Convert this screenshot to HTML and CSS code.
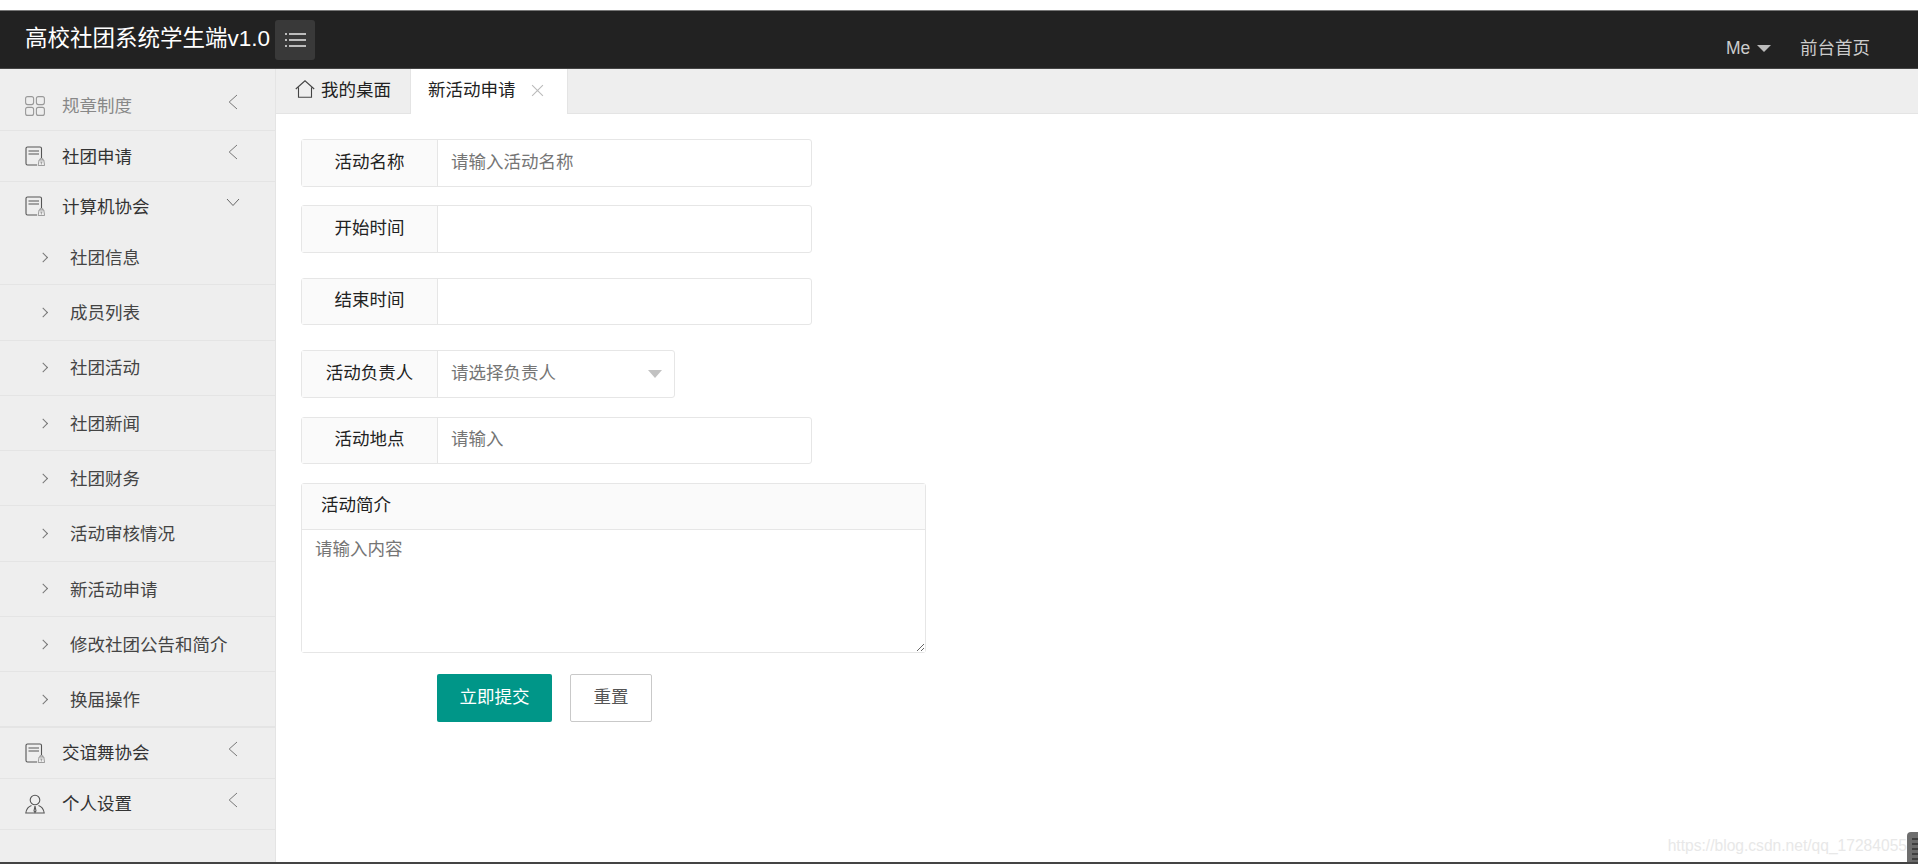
FILE: index.html
```html
<!DOCTYPE html>
<html lang="zh-CN">
<head>
<meta charset="utf-8">
<title>高校社团系统学生端</title>
<link rel="stylesheet" href="styles.css">
</head>
<body>
<svg class="defs" width="0" height="0" aria-hidden="true">
  <symbol id="doc" viewBox="0 0 20 20">
    <path d="M16.500 12V2.500A1.500 1.500 0 0 0 15 1H2.500A1.500 1.500 0 0 0 1 2.500V17.500A1.500 1.500 0 0 0 2.500 19H12" fill="none" stroke="currentColor" stroke-width="1.100"/>
    <path d="M3.500 5h10.500M3.500 8h10.500" fill="none" stroke="currentColor" stroke-width="1.100"/>
    <path d="M14 14h4.800l.8 5.500H13.200z M15 14v-1.300h2.800V14" fill="none" stroke="#888" stroke-width=".8"/>
    <path d="M15.200 16h2.400M16.400 16v2.500" fill="none" stroke="#888" stroke-width=".7"/>
  </symbol>
</svg>
<div class="topgap"></div>
<header class="header">
  <div class="brand">高校社团系统学生端v1.0</div>
  <button class="menu-btn" type="button" aria-label="菜单">
    <svg width="21" height="14" viewBox="0 0 21 14"><path d="M0 1h2M4 1h17M0 7h2M4 7h17M0 13h2M4 13h17" stroke="#e8e8e8" stroke-width="1.300" fill="none"/></svg>
  </button>
  <nav class="header-nav">
    <span class="me">Me<i class="caret"></i></span>
    <span class="home-link">前台首页</span>
  </nav>
</header>
<div class="body">
  <aside class="sidebar">
    <div class="row row-first">
      <svg class="ico ico-muted" viewBox="0 0 20 20"><g fill="none" stroke="currentColor" stroke-width="1.100"><rect x=".6" y=".6" width="8" height="8" rx="2"/><rect x="11.400" y=".6" width="8" height="8" rx="2"/><rect x=".6" y="11.400" width="8" height="8" rx="2"/><rect x="11.400" y="11.400" width="8" height="8" rx="2"/></g></svg>
      <span class="muted row-text">规章制度</span>
      <svg class="chev" viewBox="0 0 10 16"><path d="M9 1 1.200 8 9 15" fill="none" stroke="#777" stroke-width="1"/></svg>
    </div>
    <div class="row">
      <svg class="ico"><use href="#doc"/></svg>
      <span class="row-text">社团申请</span>
      <svg class="chev" viewBox="0 0 10 16"><path d="M9 1 1.200 8 9 15" fill="none" stroke="#777" stroke-width="1"/></svg>
    </div>
    <div class="row row-open">
      <svg class="ico"><use href="#doc"/></svg>
      <span class="row-text">计算机协会</span>
      <svg class="chev-down" viewBox="0 0 14 9"><path d="M1 1l6 6.500L13 1" fill="none" stroke="#666" stroke-width="1"/></svg>
    </div>
    <ul class="sub">
      <li><i class="sub-chev"></i><span class="row-text">社团信息</span></li>
      <li><i class="sub-chev"></i><span class="row-text">成员列表</span></li>
      <li><i class="sub-chev"></i><span class="row-text">社团活动</span></li>
      <li><i class="sub-chev"></i><span class="row-text">社团新闻</span></li>
      <li><i class="sub-chev"></i><span class="row-text">社团财务</span></li>
      <li><i class="sub-chev"></i><span class="row-text">活动审核情况</span></li>
      <li><i class="sub-chev"></i><span class="row-text">新活动申请</span></li>
      <li><i class="sub-chev"></i><span class="row-text">修改社团公告和简介</span></li>
      <li><i class="sub-chev"></i><span class="row-text">换届操作</span></li>
    </ul>
    <div class="row">
      <svg class="ico"><use href="#doc"/></svg>
      <span class="row-text">交谊舞协会</span>
      <svg class="chev" viewBox="0 0 10 16"><path d="M9 1 1.200 8 9 15" fill="none" stroke="#777" stroke-width="1"/></svg>
    </div>
    <div class="row">
      <svg class="ico" viewBox="0 0 20 20"><g fill="none" stroke="currentColor" stroke-width="1.100"><circle cx="10" cy="6" r="4.800"/><path d="M6.500 11.500C3.500 12.500 1.500 14.500.8 19h18.400c-.7-4.500-2.700-6.500-5.700-7.500"/><path d="M10 12l-1 5 1 1.500 1-1.500z"/></g></svg>
      <span class="row-text">个人设置</span>
      <svg class="chev" viewBox="0 0 10 16"><path d="M9 1 1.200 8 9 15" fill="none" stroke="#777" stroke-width="1"/></svg>
    </div>
  </aside>
  <main class="main">
    <div class="tabs">
      <div class="tab tab-home">
        <svg class="home-ico" viewBox="0 0 20 18"><path d="M.8 9 10 .8 19.200 9M3.500 7.500V17.300h13V7.500" fill="none" stroke="#444" stroke-width="1.100"/></svg>
        我的桌面
      </div>
      <div class="tab tab-active">
        新活动申请
        <svg class="close" viewBox="0 0 12 12"><path d="M1 1l10 10M11 1 1 11" stroke="#bbb" stroke-width="1" fill="none"/></svg>
      </div>
    </div>
    <form class="form">
      <div class="field gap-18">
        <label class="label">活动名称</label>
        <input class="control" type="text" placeholder="请输入活动名称">
      </div>
      <div class="field gap-25">
        <label class="label">开始时间</label>
        <input class="control" type="text">
      </div>
      <div class="field field-47 gap-25">
        <label class="label">结束时间</label>
        <input class="control" type="text">
      </div>
      <div class="field field-short gap-19">
        <label class="label">活动负责人</label>
        <div class="select"><span>请选择负责人</span><i class="select-caret"></i></div>
      </div>
      <div class="field field-47 gap-19">
        <label class="label">活动地点</label>
        <input class="control" type="text" placeholder="请输入">
      </div>
      <div class="area gap-21">
        <div class="area-head">活动简介</div>
        <textarea class="area-input" placeholder="请输入内容"></textarea>
      </div>
      <div class="actions">
        <button class="btn btn-primary" type="button">立即提交</button>
        <button class="btn btn-plain" type="button">重置</button>
      </div>
    </form>
  </main>
</div>
<div class="bottom-line"></div>
<div class="watermark">https://blog.csdn.net/qq_17284055</div>
<div class="grip"></div>
</body>
</html>
```
FILE: styles.css
```css
* { box-sizing: border-box; }
html, body { margin: 0; height: 100%; }
body {
  position: relative;
  display: flex;
  flex-direction: column;
  height: 864px;
  overflow: hidden;
  background: #fff;
  color: #333;
  font: 17.5px/1.4 "Liberation Sans", "Noto Sans CJK SC", sans-serif;
}
.defs { position: absolute; }
.topgap { height: 10px; flex: none; }

/* header */
.header {
  flex: none;
  height: 59px;
  display: flex;
  align-items: center;
  padding-left: 25px;
  background: #222;
  border-top: 1px solid #777;
  border-bottom: 1px solid #444;
  color: #fff;
}
.brand { width: 250px; font-size: 22.5px; line-height: 30px; white-space: nowrap; margin-bottom: 1px; }
.menu-btn {
  width: 40px;
  height: 40px;
  padding: 0;
  display: flex;
  align-items: center;
  justify-content: center;
  background: #393939;
  border: 0;
  border-radius: 3px;
}
.header-nav {
  margin-left: auto;
  margin-right: 48px;
  margin-top: 17px;
  display: flex;
  align-items: center;
  color: #ccc;
  line-height: 24px;
}
.me { display: flex; align-items: center; width: 74px; }
.caret {
  margin-left: 7px;
  margin-top: 1px;
  border-style: solid;
  border-width: 7px 7px 0;
  border-color: #bbb transparent transparent;
}

/* layout */
.body { flex: 1; min-height: 0; display: flex; }
.bottom-line { flex: none; height: 2px; background: #444; }

/* sidebar */
.sidebar {
  flex: none;
  width: 276px;
  background: #eee;
  border-right: 1px solid #e4e4e4;
}
.row {
  height: 51px;
  display: flex;
  align-items: center;
  padding: 0 35px 0 25px;
  border-bottom: 1px solid #e4e4e4;
  color: #333;
}
.row-text { position: relative; top: 1px; }
.row-first { height: 62px; padding-top: 12px; }
.row-first .chev { margin-bottom: 8px; }
.row-open { height: 48px; border-bottom: 0; }
.ico { width: 20px; height: 20px; margin-right: 17px; color: #555; flex: none; }
.ico-muted { color: #999; }
.muted { color: #888; }
.chev { width: 10px; height: 16px; margin-left: auto; margin-bottom: 8px; margin-right: 2px; }
.chev-down { width: 14px; height: 9px; margin-left: auto; margin-bottom: 8px; }
.sub { list-style: none; margin: 0; padding: 0; }
.sub li {
  height: 55.300px;
  display: flex;
  align-items: center;
  padding-left: 41px;
  border-bottom: 1px solid #e4e4e4;
  color: #444;
}
.sub li:last-child { border-bottom-width: 2px; }
.sub-chev {
  width: 7px;
  height: 7px;
  margin-right: 22px;
  border-top: 1px solid #777;
  border-right: 1px solid #777;
  transform: rotate(45deg) translate(-1px, 1px);
}

/* tabs */
.main { flex: 1; min-width: 0; }
.tabs {
  height: 45px;
  display: flex;
  background: #eee;
  border-bottom: 1px solid #e4e4e4;
}
.tab { display: flex; align-items: center; white-space: nowrap; color: #222; padding-bottom: 2px; }
.tab-home { width: 134px; padding-left: 19px; }
.home-ico { width: 20px; height: 18px; margin-right: 6px; margin-bottom: 3px; }
.tab-active {
  width: 158px;
  height: 45px;
  padding-left: 17px;
  background: #fff;
  border-right: 1px solid #e4e4e4;
  border-left: 1px solid #e4e4e4;
}
.close { width: 13px; height: 13px; margin-left: 15px; }

/* form */
.form { padding: 25px 0 0 25px; }
.field {
  display: flex;
  width: 511px;
  height: 48px;
  background: #fff;
  border: 1px solid #e6e6e6;
  border-radius: 3px;
}
.field-47 { height: 47px; }
.field-short { width: 374px; }
.gap-18 { margin-bottom: 18px; }
.gap-19 { margin-bottom: 19px; }
.gap-21 { margin-bottom: 21px; }
.gap-25 { margin-bottom: 25px; }
.label {
  flex: none;
  width: 136px;
  padding-bottom: 2px;
  display: flex;
  align-items: center;
  justify-content: center;
  background: #fafafa;
  border-right: 1px solid #e6e6e6;
  color: #222;
}
.control, .select {
  flex: 1;
  min-width: 0;
  padding: 0 13px 2px;
  border: 0;
  background: transparent;
  font: inherit;
  color: #333;
  outline: 0;
}
.select { display: flex; align-items: center; justify-content: space-between; color: #757575; }
.control::placeholder, .area-input::placeholder { color: #757575; opacity: 1; }
.select-caret {
  border-style: solid;
  border-width: 8px 7px 0;
  border-color: #c2c2c2 transparent transparent;
  margin-right: -1px;
  margin-top: 2px;
}
.area {
  width: 625px;
  height: 170px;
  display: flex;
  flex-direction: column;
  border: 1px solid #e6e6e6;
  border-radius: 3px;
}
.area-head {
  flex: none;
  height: 46px;
  padding: 0 0 2px 19px;
  display: flex;
  align-items: center;
  background: #fafafa;
  border-bottom: 1px solid #e6e6e6;
  color: #222;
}
.area-input {
  flex: 1;
  display: block;
  width: 100%;
  padding: 7px 13px;
  border: 0;
  background: #fff;
  font: inherit;
  outline: 0;
  resize: both;
}
.actions { display: flex; padding-left: 136px; }
.btn {
  height: 48px;
  font: inherit;
  border-radius: 2px;
  padding: 0 0 2px;
}
.btn-primary { width: 115px; margin-right: 18px; background: #009688; border: 0; color: #fff; }
.btn-plain { width: 82px; background: #fff; border: 1px solid #c9c9c9; color: #555; }

/* overlays */
.watermark {
  position: absolute;
  right: 11px;
  bottom: 6px;
  font-size: 15.600px;
  line-height: 24px;
  color: #e8e8e8;
  white-space: nowrap;
}
.grip {
  position: absolute;
  right: 0;
  bottom: 2px;
  width: 11px;
  height: 30px;
  border-radius: 4px 0 0 0;
  background:
    repeating-linear-gradient(#3f3f3f 0 2px, #6a6a6a 2px 5px) 5px 6px no-repeat,
    #6e6e6e;
}
```
